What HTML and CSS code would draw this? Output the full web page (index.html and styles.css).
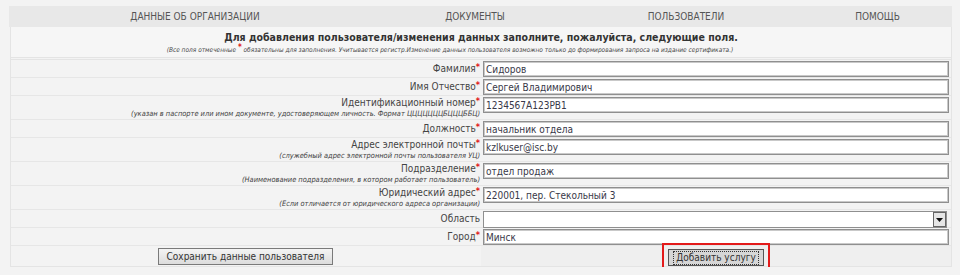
FILE: index.html
```html
<!DOCTYPE html>
<html lang="ru">
<head>
<meta charset="utf-8">
<title>Пользователи</title>
<link rel="stylesheet" href="styles.css">
</head>
<body>
<div class="page">
  <nav class="nav">
    <a href="#">ДАННЫЕ ОБ ОРГАНИЗАЦИИ</a>
    <a href="#">ДОКУМЕНТЫ</a>
    <a href="#">ПОЛЬЗОВАТЕЛИ</a>
    <a href="#">ПОМОЩЬ</a>
  </nav>
  <div class="box">
    <div class="intro">
      <h1 class="title">Для добавления пользователя/изменения данных заполните, пожалуйста, следующие поля.</h1>
      <p class="hint">(Все поля отмеченные <span class="req">*</span> обязательны для заполнения. Учитывается регистр.Изменение данных пользователя возможно только до формирования запроса на издание сертификата.)</p>
    </div>
    <div class="form">
      <div class="lab s"><span class="name">Фамилия<span class="req">*</span></span></div>
      <div class="fld s"><input class="inp" value="Сидоров"></div>

      <div class="lab s"><span class="name">Имя Отчество<span class="req">*</span></span></div>
      <div class="fld s"><input class="inp" value="Сергей Владимирович"></div>

      <div class="lab d"><span class="name">Идентификационный номер<span class="req">*</span></span><span class="note">(указан в паспорте или ином документе, удостоверяющем личность. Формат ЦЦЦЦЦЦЦБЦЦЦББЦ)</span></div>
      <div class="fld d"><input class="inp" value="1234567A123PB1"></div>

      <div class="lab s"><span class="name">Должность<span class="req">*</span></span></div>
      <div class="fld s"><input class="inp" value="начальник отдела"></div>

      <div class="lab d"><span class="name">Адрес электронной почты<span class="req">*</span></span><span class="note">(служебный адрес электронной почты пользователя УЦ)</span></div>
      <div class="fld d"><input class="inp" value="kzlkuser@isc.by"></div>

      <div class="lab d"><span class="name">Подразделение<span class="req">*</span></span><span class="note">(Наименование подразделения, в котором работает пользователь)</span></div>
      <div class="fld d"><input class="inp" value="отдел продаж"></div>

      <div class="lab d"><span class="name">Юридический адрес<span class="req">*</span></span><span class="note">(Если отличается от юридического адреса организации)</span></div>
      <div class="fld d"><input class="inp" value="220001, пер. Стекольный 3"></div>

      <div class="lab s"><span class="name">Область</span></div>
      <div class="fld s"><div class="select"><span class="arrow"><svg width="7" height="4" viewBox="0 0 7 4"><path d="M0 0H7L3.5 4Z" fill="#111"/></svg></span></div></div>

      <div class="lab c"><span class="name">Город<span class="req">*</span></span></div>
      <div class="fld c"><input class="inp" value="Минск"></div>

      <div class="lab b"><button class="btn">Сохранить данные пользователя</button></div>
      <div class="fld b act"><span class="mark"><button class="btn focus"><span class="ring">Добавить услугу</span></button></span></div>
    </div>
  </div>
</div>
</body>
</html>
```

FILE: styles.css
```css
html, body {
  margin: 0;
  background: #f3f3f3;
}
body {
  font-family: "DejaVu Sans Condensed", "DejaVu Sans", sans-serif;
  font-stretch: condensed;
  color: #333;
}
.page {
  padding: 6px 0 0 9px;
  width: 943px;
}
.nav {
  display: grid;
  grid-template-columns: 372px 188px 234px 149px;
  height: 21px;
  background: #e8e8e8;
}
.nav a {
  text-align: center;
  line-height: 22px;
  font-size: 10px;
  color: #555;
  text-decoration: none;
}
.box {
  margin-left: 1px;
  width: 942px;
  box-sizing: border-box;
  border: 1px solid #e4e4e4;
  border-top: 0;
}
.intro {
  height: 31px;
  box-sizing: border-box;
  border-bottom: 1px solid #e4e4e4;
  margin-bottom: 1px;
  text-align: center;
  background: #f6f6f6;
}
.title {
  margin: 0;
  padding-top: 3px;
  font-size: 10.5px;
  line-height: 14px;
  font-weight: bold;
  color: #333;
}
.hint {
  margin: 0;
  padding: 2px 62px 0 0;
  font-size: 6.5px;
  line-height: 9px;
  font-style: italic;
  color: #444;
}
.hint .req {
  font-size: 8px;
  vertical-align: 2px;
}
.form {
  display: grid;
  grid-template-columns: 470px 1fr;
  border-top: 1px solid #e4e4e4;
}
.lab, .fld {
  box-sizing: border-box;
  border-bottom: 1px solid #e6e6e6;
}
.lab {
  display: flex;
  flex-direction: column;
  justify-content: center;
  align-items: flex-end;
  padding-right: 1px;
  font-size: 10px;
  color: #444;
}
.s { height: 18px; }
.d { height: 24px; }
.c { height: 18px; }
.b { height: 20px; border-bottom: 0; }
.lab .name {
  line-height: 13px;
  white-space: nowrap;
}
.lab .note {
  font-size: 7.4px;
  line-height: 10px;
  font-style: italic;
  color: #444;
  white-space: nowrap;
}
.req {
  color: #e01818;
  font-weight: bold;
  font-size: 9px;
  vertical-align: 2px;
  line-height: 0;
}
.fld {
  padding: 1px 2px 0 2px;
}
.inp {
  display: block;
  width: 100%;
  height: 16px;
  box-sizing: border-box;
  margin: 0;
  padding: 0 2px;
  border: 1px solid #8f8f8f;
  box-shadow: inset 0 0 0 1px #c9c9c9;
  background: #fff;
  font-family: "DejaVu Sans Condensed", "DejaVu Sans", sans-serif;
  font-stretch: condensed;
  font-size: 10px;
  color: #383848;
  outline: none;
}
.select {
  display: flex;
  justify-content: flex-end;
  align-items: center;
  width: 464px;
  height: 17px;
  box-sizing: border-box;
  border: 1px solid #8f8f8f;
  background: #fff;
}
.arrow {
  display: flex;
  align-items: center;
  justify-content: center;
  width: 13px;
  height: 15px;
  box-sizing: border-box;
  border: 1px solid #666;
  background: #e6e6e6;
}
.lab.b {
  align-items: center;
  justify-content: center;
}
.fld.act {
  display: flex;
  justify-content: center;
  align-items: center;
  background: #efefef;
  padding: 0;
}
.btn {
  height: 17px;
  margin: 0;
  padding: 0 8px;
  box-sizing: border-box;
  border: 1px solid #7a7a7a;
  background: linear-gradient(#f4f4f4, #dcdcdc);
  font-family: "DejaVu Sans Condensed", "DejaVu Sans", sans-serif;
  font-stretch: condensed;
  font-size: 10px;
  line-height: 13px;
  color: #333;
}
.btn.focus {
  padding: 0 4px;
  background: #d6d6d6;
  border-color: #555;
}
.ring {
  display: inline-block;
  padding: 0 2px;
  border: 1px dotted #333;
  line-height: 12px;
}
.mark {
  display: inline-block;
  padding: 1px 4px;
  outline: 2px solid #e31b1b;
}
```
